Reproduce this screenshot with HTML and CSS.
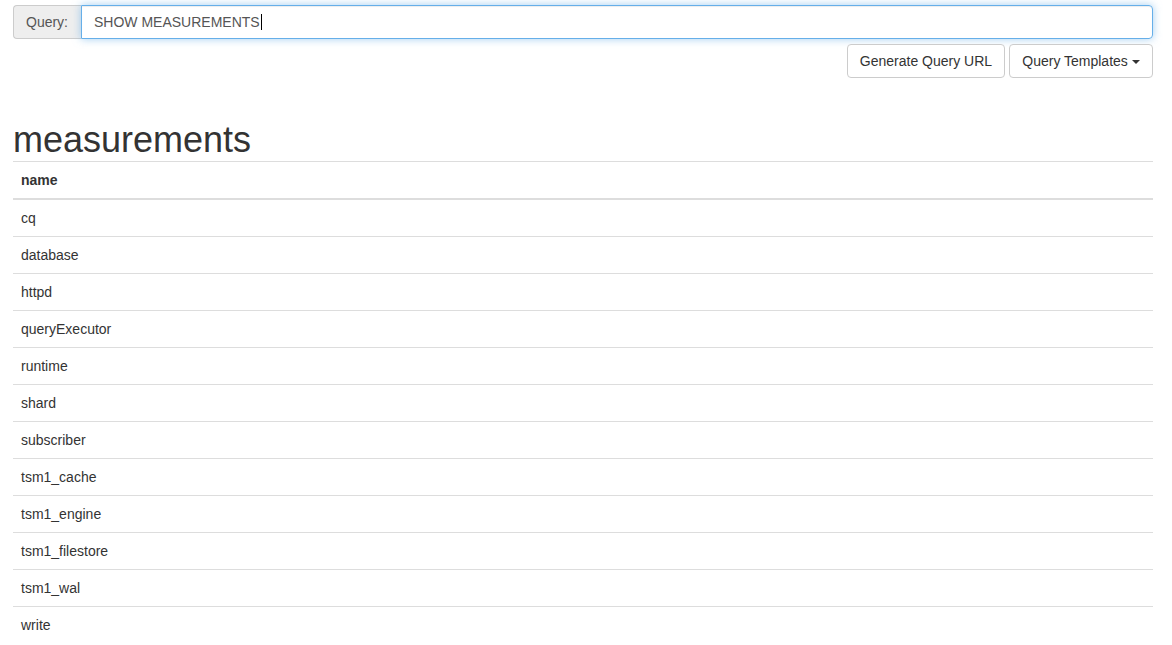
FILE: index.html
```html
<!DOCTYPE html>
<html>
<head>
<meta charset="utf-8">
<link rel="stylesheet" href="styles.css">
</head>
<body>
<div class="page">
  <div class="input-group">
    <span class="addon">Query:</span>
    <div class="query-input">SHOW MEASUREMENTS<span class="text-caret"></span></div>
  </div>
  <div class="actions">
    <button class="btn btn-url">Generate Query URL</button>
    <button class="btn btn-templates">Query Templates <span class="caret"></span></button>
  </div>
  <h1 class="title">measurements</h1>
  <table class="table">
    <thead>
      <tr><th>name</th></tr>
    </thead>
    <tbody>
      <tr><td>cq</td></tr>
      <tr><td>database</td></tr>
      <tr><td>httpd</td></tr>
      <tr><td>queryExecutor</td></tr>
      <tr><td>runtime</td></tr>
      <tr><td>shard</td></tr>
      <tr><td>subscriber</td></tr>
      <tr><td>tsm1_cache</td></tr>
      <tr><td>tsm1_engine</td></tr>
      <tr><td>tsm1_filestore</td></tr>
      <tr><td>tsm1_wal</td></tr>
      <tr><td>write</td></tr>
    </tbody>
  </table>
</div>
</body>
</html>
```

FILE: styles.css
```css
html, body {
  margin: 0;
  padding: 0;
  background: #fff;
}
body {
  font-family: "Liberation Sans", Arial, Helvetica, sans-serif;
  font-size: 14px;
  line-height: 20px;
  color: #333;
}
.page {
  padding: 5px 19px 0 13px;
}
.input-group {
  display: flex;
  height: 34px;
}
.addon {
  box-sizing: border-box;
  height: 34px;
  padding: 6px 12px;
  background: #eee;
  border: 1px solid #ccc;
  border-right: 0;
  border-radius: 4px 0 0 4px;
  color: #555;
  width: 68px;
}
.query-input {
  flex: 1;
  box-sizing: border-box;
  height: 34px;
  padding: 6px 12px;
  border: 1px solid #66afe9;
  border-radius: 0 4px 4px 0;
  color: #555;
  box-shadow: inset 0 1px 1px rgba(0,0,0,.075), 0 0 8px rgba(102,175,233,.6);
  display: flex;
  align-items: center;
}
.text-caret {
  display: inline-block;
  width: 1px;
  height: 16px;
  background: #000;
  margin-left: 1px;
}
.actions {
  display: flex;
  justify-content: flex-end;
  gap: 4px;
  margin-top: 5px;
}
.btn {
  box-sizing: border-box;
  height: 34px;
  font-family: inherit;
  font-size: 14px;
  line-height: 20px;
  padding: 6px 0;
  white-space: nowrap;
  text-align: center;
  color: #333;
  background: #fff;
  border: 1px solid #ccc;
  border-radius: 4px;
}
.btn-url {
  width: 158px;
}
.btn-templates {
  width: 144px;
}
.caret {
  display: inline-block;
  width: 0;
  height: 0;
  margin-left: 0;
  vertical-align: middle;
  border-top: 4px solid #333;
  border-left: 4px solid transparent;
  border-right: 4px solid transparent;
}
.title {
  font-size: 36px;
  font-weight: 500;
  line-height: 39.6px;
  margin: 42px 0 1px;
  color: #333;
}
.table {
  width: 100%;
  border-collapse: collapse;
  border-spacing: 0;
}
.table th, .table td {
  text-align: left;
  padding: 8px;
  line-height: 20px;
  border-top: 1px solid #ddd;
}
.table th {
  font-weight: bold;
  border-bottom: 2px solid #ddd;
}
```
